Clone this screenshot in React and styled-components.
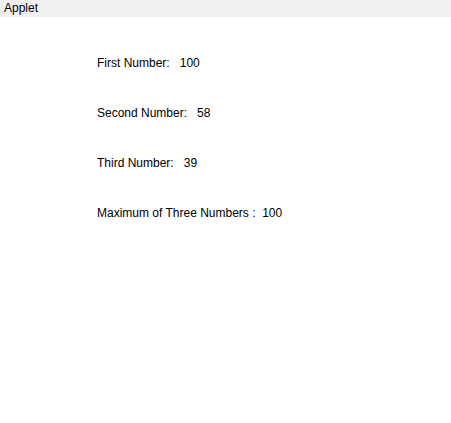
import React from "react";
import styled, { createGlobalStyle } from "styled-components";

const GlobalStyle = createGlobalStyle`
  html, body {
    margin: 0;
    padding: 0;
    background: #ffffff;
  }
  body {
    font-family: "Liberation Sans", Arial, sans-serif;
    color: #000000;
  }
`;

const rows = [
  { label: "First Number:", gap: "   ", value: 100 },
  { label: "Second Number:", gap: "   ", value: 58 },
  { label: "Third Number:", gap: "   ", value: 39 },
  { label: "Maximum of Three Numbers :", gap: "  ", value: 100 },
];

const App = () => {
  return (
    <>
      <GlobalStyle />
      <Window>
        <TitleBar>Applet</TitleBar>
        <Canvas>
          {rows.map((row) => (
            <Line key={row.label}>
              {row.label}
              {row.gap}
              {row.value}
            </Line>
          ))}
        </Canvas>
      </Window>
    </>
  );
};

const Window = styled.div`
  width: 451px;
  height: 423px;
  background: #ffffff;
`;

const TitleBar = styled.div`
  height: 17px;
  line-height: 16px;
  padding-left: 4px;
  background: #f0f0f0;
  font-size: 12px;
`;

const Canvas = styled.div`
  display: flex;
  flex-direction: column;
  gap: 36px;
  padding: 39px 0 0 97px;
`;

const Line = styled.div`
  font-size: 12px;
  line-height: 14px;
  white-space: pre;
`;

export default App;
